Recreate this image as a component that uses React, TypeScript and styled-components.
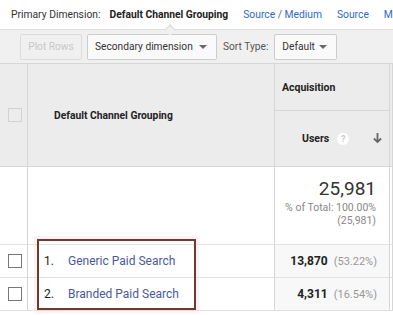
import styled, { createGlobalStyle } from "styled-components";

const GlobalStyle = createGlobalStyle`
  body {
    margin: 0;
    background: #fff;
    font-family: Roboto, "Liberation Sans", Arial, sans-serif;
    color: #333;
  }
`;

const rows = [
  { name: "Generic Paid Search", users: "13,870", share: "(53.22%)" },
  { name: "Branded Paid Search", users: "4,311", share: "(16.54%)" },
];

const DropArrow = () => (
  <svg width="8" height="4" viewBox="0 0 8 4">
    <path d="M0 0h8L4 4z" fill="#666" />
  </svg>
);

const App = (): JSX.Element => {
  return (
    <Page>
      <GlobalStyle />
      <DimBar>
        <Label>Primary Dimension:</Label>
        <Current>Default Channel Grouping</Current>
        <DimLink>Source / Medium</DimLink>
        <DimLink>Source</DimLink>
        <DimLink>Medium</DimLink>
      </DimBar>

      <Toolbar>
        <Button disabled>Plot Rows</Button>
        <Button $width={130}>
          Secondary dimension <DropArrow />
        </Button>
        <SortLabel>Sort Type:</SortLabel>
        <Button $width={63}>
          Default <DropArrow />
        </Button>
      </Toolbar>

      <Table>
        <HeadCell $row="1 / 3" $col="1">
          <Check $head />
        </HeadCell>
        <HeadCell $row="1 / 3" $col="2">
          <DimTitle>Default Channel Grouping</DimTitle>
        </HeadCell>
        <HeadCell $row="1" $col="3">
          <GroupTitle>Acquisition</GroupTitle>
        </HeadCell>
        <HeadCell $row="1 / 3" $col="4" />
        <HeadCell $row="2" $col="3">
          <Metric>
            Users
            <Help>?</Help>
            <SortArrow viewBox="0 0 10 12" width="9" height="11">
              <path d="M5 0v10M1 6l4 4 4-4" stroke="#666" strokeWidth="2" fill="none" />
            </SortArrow>
          </Metric>
        </HeadCell>

        <BodyCell />
        <BodyCell />
        <TotalCell>
          <Big>25,981</Big>
          <Small>% of Total: 100.00%</Small>
          <Small>(25,981)</Small>
        </TotalCell>
        <BodyCell />

        {rows.map((r, i) => (
          <>
            <BodyCell key={"c" + i}>
              <Check />
            </BodyCell>
            <BodyCell key={"n" + i}>
              <Num>{i + 1}.</Num>
              <RowLink>{r.name}</RowLink>
            </BodyCell>
            <ValueCell key={"v" + i}>
              <strong>{r.users}</strong>
              <Share>{r.share}</Share>
            </ValueCell>
            <BodyCell key={"e" + i} />
          </>
        ))}

        <Highlight />
      </Table>
    </Page>
  );
};

export default App;

const Page = styled.div`
  width: 393px;
  height: 315px;
  overflow: hidden;
`;

const DimBar = styled.div`
  height: 29px;
  display: flex;
  align-items: center;
  padding-left: 11px;
  font-size: 10.3px;
  white-space: nowrap;
`;

const Label = styled.span`
  color: #333;
  margin-right: 9px;
`;

const Current = styled.span`
  font-weight: 700;
  color: #222;
  margin-right: 15px;
  position: relative;

  &::after {
    content: "";
    position: absolute;
    left: 57px;
    top: 18px;
    width: 7px;
    height: 7px;
    background: #f0f0f0;
    border-left: 1px solid #d8d8d8;
    border-top: 1px solid #d8d8d8;
    transform: rotate(45deg);
  }
`;

const DimLink = styled.span`
  color: #2f6bc1;
  margin-right: 15px;
`;

const Toolbar = styled.div`
  height: 34px;
  box-sizing: border-box;
  background: #f0f0f0;
  border-top: 1px solid #ddd;
  display: flex;
  align-items: center;
  padding: 0 0 0 20px;
  gap: 5px;
`;

const Button = styled.button<{ $width?: number }>`
  flex-shrink: 0;
  height: 26px;
  width: ${(p) => (p.$width ? p.$width + "px" : "62px")};
  box-sizing: border-box;
  display: flex;
  align-items: center;
  justify-content: space-between;
  padding: 0 9px 0 7px;
  font-family: inherit;
  font-size: 10.2px;
  white-space: nowrap;
  color: #333;
  background: #fafafa;
  border: 1px solid #ccc;
  border-radius: 2px;

  &:disabled {
    color: #c8c8c8;
    background: #f0f0f0;
    border-color: #dcdcdc;
    justify-content: center;
    padding: 0;
  }
`;

const SortLabel = styled.span`
  font-size: 10.2px;
  color: #555;
  margin: 0 1px;
  white-space: nowrap;
`;

const Table = styled.div`
  position: relative;
  display: grid;
  grid-template-columns: 28px 247px 115px 1fr;
  grid-template-rows: 47px 56px 78px 33px 33px;
  border-top: 1px solid #d6d6d6;
`;

const HeadCell = styled.div<{ $row: string; $col: string }>`
  grid-row: ${(p) => p.$row};
  grid-column: ${(p) => p.$col};
  background: #ececec;
  border-right: 1px solid #d6d6d6;
  border-bottom: 1px solid #d6d6d6;
  display: flex;
  align-items: center;
  box-sizing: border-box;
`;

const Check = styled.span<{ $head?: boolean }>`
  display: block;
  width: 12px;
  height: 12px;
  margin-left: 8px;
  border: 1px solid ${(p) => (p.$head ? "#d2d2d2" : "#777")};
  background: ${(p) => (p.$head ? "#ececec" : "#fff")};
`;

const DimTitle = styled.span`
  font-size: 10.3px;
  font-weight: 700;
  color: #222;
  margin-left: 26px;
`;

const GroupTitle = styled.span`
  font-size: 10.5px;
  font-weight: 700;
  color: #222;
  margin-left: 7px;
`;

const Metric = styled.div`
  flex: 1;
  display: flex;
  align-items: center;
  padding-left: 27px;
  font-size: 10.5px;
  font-weight: 700;
  color: #222;
`;

const Help = styled.span`
  width: 12px;
  height: 12px;
  border-radius: 50%;
  background: #fff;
  color: #c8c8c8;
  font-size: 9px;
  font-weight: 700;
  display: flex;
  align-items: center;
  justify-content: center;
  margin-left: 8px;
`;

const SortArrow = styled.svg`
  margin-left: auto;
  margin-right: 7px;
`;

const BodyCell = styled.div`
  background: #fff;
  border-right: 1px solid #d6d6d6;
  border-bottom: 1px solid #e2e2e2;
  display: flex;
  align-items: center;
  box-sizing: border-box;
  font-size: 12px;
`;

const TotalCell = styled(BodyCell)`
  flex-direction: column;
  align-items: flex-end;
  justify-content: flex-start;
  padding: 10px 13px 0 0;
`;

const Big = styled.div`
  font-size: 19px;
  color: #333;
  line-height: 24px;
`;

const Small = styled.div`
  font-size: 10.5px;
  color: #888;
  line-height: 13px;
`;

const Num = styled.span`
  color: #222;
  margin-left: 16px;
  width: 24px;
`;

const RowLink = styled.span`
  color: #4a5a99;
`;

const ValueCell = styled(BodyCell)`
  background: #f8f8f8;
  justify-content: flex-end;
  padding-right: 12px;
  color: #222;
  font-size: 12px;
`;

const Share = styled.span`
  color: #999;
  font-size: 11px;
  margin-left: 6px;
`;

const Highlight = styled.div`
  position: absolute;
  left: 37px;
  top: 175px;
  width: 159px;
  height: 71px;
  box-sizing: border-box;
  border: 2px solid #6e3c2b;
  box-shadow: 0 0 0 3px rgba(255, 200, 215, 0.25);
`;
